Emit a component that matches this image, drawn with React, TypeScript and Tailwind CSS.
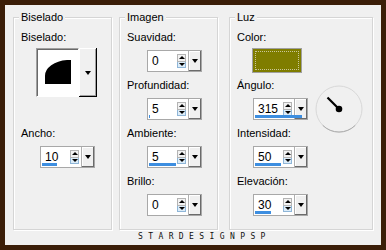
import type { ReactNode } from "react"

function Up() {
  return <div className="h-0 w-0 border-x-[3px] border-b-[3px] border-x-transparent border-b-black" />
}

function Down({ big = false }: { big?: boolean }) {
  return big ? (
    <div className="h-0 w-0 border-x-[3px] border-t-[4px] border-x-transparent border-t-black" />
  ) : (
    <div className="h-0 w-0 border-x-[3px] border-t-[3px] border-x-transparent border-t-black" />
  )
}

function SpinBox({ value, bar, className = "" }: { value: string; bar: number; className?: string }) {
  return (
    <div className={`relative flex h-[22px] w-[55px] border border-[#a8a8a8] bg-white ${className}`}>
      <div className="flex flex-1 items-center pl-[4px] text-[12px] leading-none text-black">{value}</div>
      <div className="my-[3px] mr-[2px] flex w-[9px] flex-col">
        <div className="flex flex-1 items-center justify-center border border-[#b4b4b4] bg-[#f2f2f2]">
          <Up />
        </div>
        <div className="flex flex-1 items-center justify-center border border-t-0 border-[#8fb6d8] bg-[#dcecf8]">
          <Down />
        </div>
      </div>
      <div className="flex w-[13px] items-center justify-center border-l border-[#b0b0b0] bg-[#f0f0f0] shadow-[inset_-1px_-1px_0_#6b6b6b,inset_1px_1px_0_#fff]">
        <Down big />
      </div>
      {bar > 0 && <div className="absolute bottom-[1px] left-[1px] h-[3px] bg-[#3d8ee0]" style={{ width: bar }} />}
    </div>
  )
}

function Group({ title, className = "", children }: { title: string; className?: string; children: ReactNode }) {
  return (
    <div
      className={`relative flex h-[213px] flex-col border border-[#d5d5d5] pl-[7px] pt-[13px] shadow-[1px_1px_0_#fff,inset_1px_1px_0_#fff] ${className}`}
    >
      <span className="absolute left-[5px] top-[-7px] bg-[#f0f0f0] px-[2px] leading-[13px]">{title}</span>
      {children}
    </div>
  )
}

function Label({ children, className = "" }: { children: ReactNode; className?: string }) {
  return <div className={`leading-[13px] ${className}`}>{children}</div>
}

export default function App() {
  return (
    <div className="h-[250px] w-[386px] bg-[#3b1e08] p-[5px] font-['Liberation_Sans',Arial,sans-serif] text-[11px] text-black">
      <div className="flex h-[240px] flex-col bg-[#f0f0f0] pl-[8px] pt-[12px]">
        <div className="flex">
          <Group title="Biselado" className="w-[99px]">
            <Label>Biselado:</Label>
            <div className="ml-[15px] mt-[4px] flex h-[49px] w-[61px]">
              <div className="flex w-[43px] items-start border border-[#a0a0a0] border-b-white border-r-white bg-white pl-[8px] pt-[11px] shadow-[inset_1px_1px_0_#696969]">
                <svg width="26" height="24" viewBox="0 0 26 24">
                  <path d="M0 24 V16 A25 16 0 0 1 22 0 H26 V24 Z" fill="#000" />
                </svg>
              </div>
              <div className="flex flex-1 items-center justify-center bg-[#f0f0f0] shadow-[inset_-1px_-1px_0_#000,inset_1px_1px_0_#fff,inset_-2px_-2px_0_#a0a0a0]">
                <Down big />
              </div>
            </div>
            <Label className="mt-[30px]">Ancho:</Label>
            <SpinBox value="10" bar={15} className="ml-[19px] mt-[6px]" />
          </Group>

          <Group title="Imagen" className="ml-[7px] w-[99px]">
            <Label>Suavidad:</Label>
            <SpinBox value="0" bar={0} className="ml-[20px] mt-[6px]" />
            <Label className="mt-[7px]">Profundidad:</Label>
            <SpinBox value="5" bar={1} className="ml-[20px] mt-[6px]" />
            <Label className="mt-[7px]">Ambiente:</Label>
            <SpinBox value="5" bar={27} className="ml-[20px] mt-[6px]" />
            <Label className="mt-[7px]">Brillo:</Label>
            <SpinBox value="0" bar={0} className="ml-[20px] mt-[6px]" />
          </Group>

          <Group title="Luz" className="ml-[11px] w-[144px]">
            <Label>Color:</Label>
            <div className="ml-[15px] mt-[4px] h-[25px] w-[50px] border border-[#a0a0a0] bg-[#7f7d00] p-[2px]">
              <div className="h-full w-full border border-dotted border-[#c9c79a]" />
            </div>
            <Label className="mt-[6px]">Ángulo:</Label>
            <div className="mt-[6px] flex items-center">
              <SpinBox value="315" bar={47} className="ml-[16px]" />
              <svg className="my-[-13px] ml-[7px]" width="48" height="48" viewBox="0 0 48 48">
                <circle cx="24" cy="24" r="23" fill="none" stroke="#d8d8d8" strokeWidth="1" />
                <path d="M7.7 40.3 A23 23 0 0 0 40.3 40.3" fill="none" stroke="#ababab" strokeWidth="1" />
                <line x1="24" y1="24" x2="12.5" y2="12.5" stroke="#000" strokeWidth="2.2" />
                <circle cx="24" cy="24" r="3.3" fill="#000" />
              </svg>
            </div>
            <Label className="mt-[7px]">Intensidad:</Label>
            <SpinBox value="50" bar={26} className="ml-[16px] mt-[6px]" />
            <Label className="mt-[7px]">Elevación:</Label>
            <SpinBox value="30" bar={16} className="ml-[16px] mt-[6px]" />
          </Group>
        </div>
        <div className="ml-[125px] mt-[3px] font-['DejaVu_Sans_Mono',monospace] text-[8px] leading-[8px] tracking-[5.4px] text-[#111]">
          STARDESIGNPSP
        </div>
      </div>
    </div>
  )
}
